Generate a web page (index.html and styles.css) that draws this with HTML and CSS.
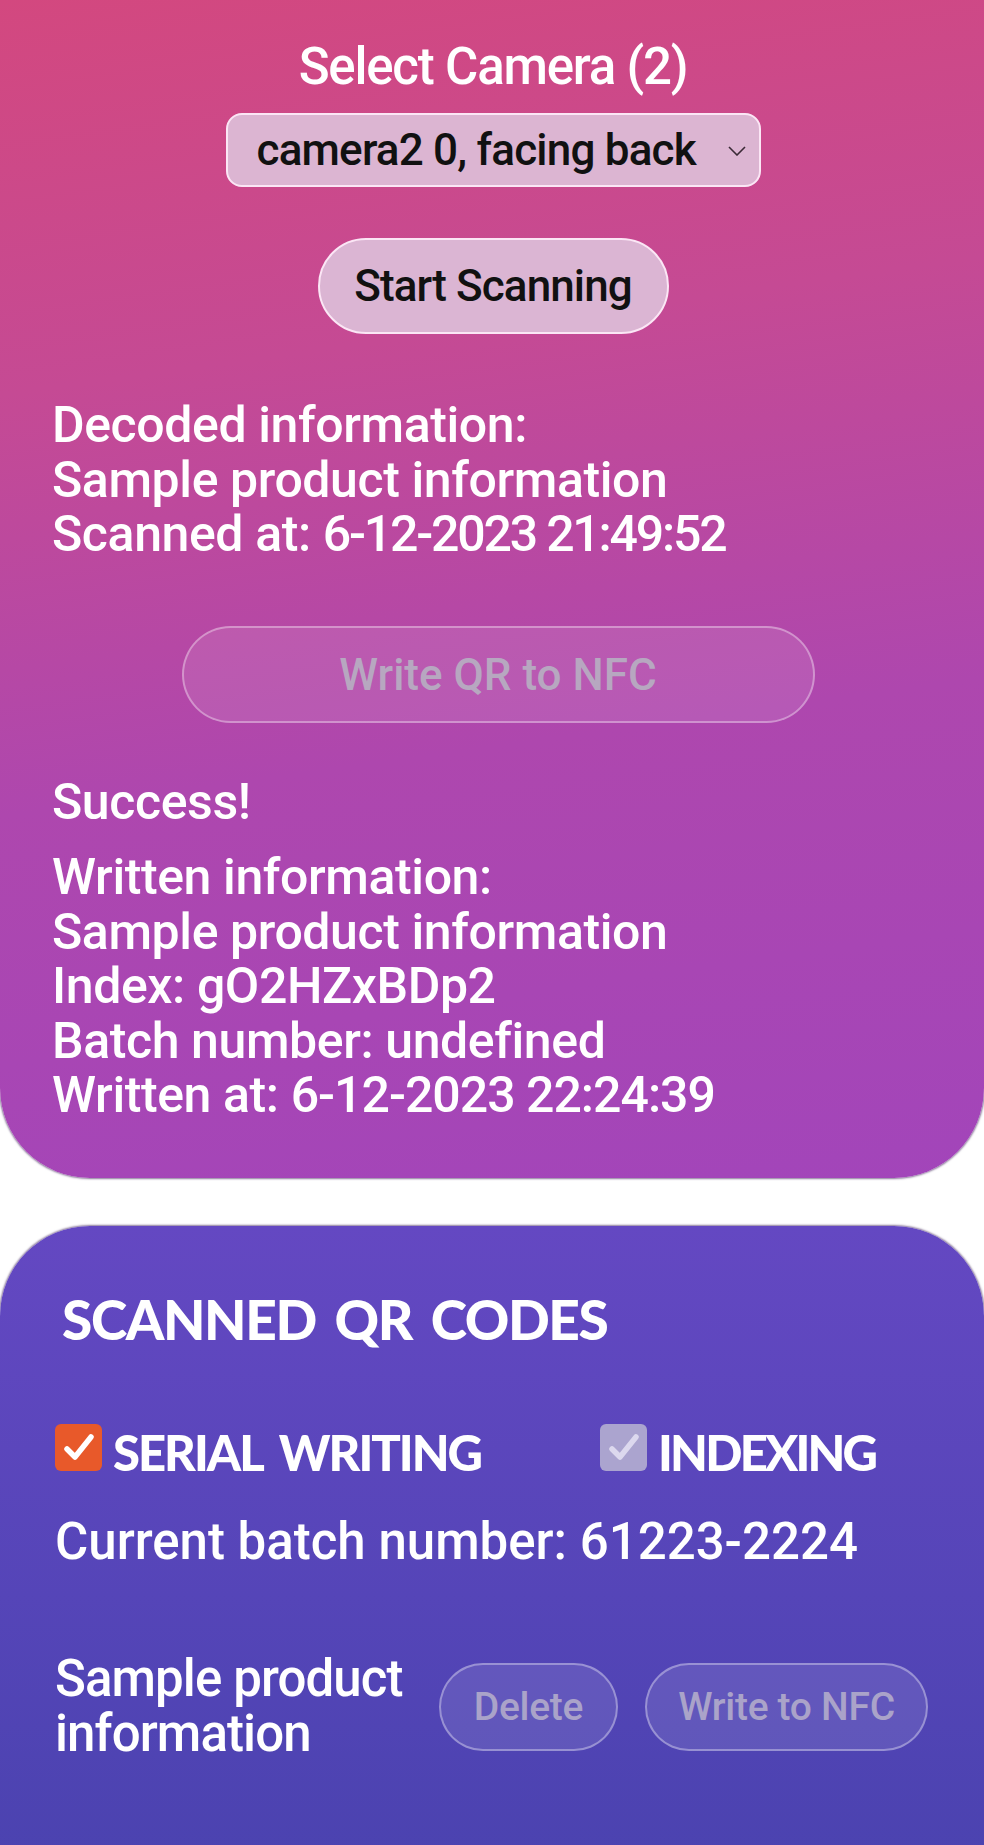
FILE: index.html
```html
<!DOCTYPE html>
<html lang="en">
<head>
<meta charset="utf-8">
<title>QR to NFC</title>
<link rel="stylesheet" href="styles.css">
</head>
<body>
<section class="card card-scan">
  <h2 class="title">Select Camera (2)</h2>
  <div class="select">
    <span class="select-text">camera2 0, facing back</span>
    <svg class="chevron" width="18" height="10" viewBox="0 0 18 10"><polyline points="1,1 9,9 17,1" fill="none" stroke="#3a2a36" stroke-width="1.6"/></svg>
  </div>
  <button class="btn btn-start">Start Scanning</button>
  <div class="info info-decoded">
    <p>Decoded information:</p>
    <p>Sample product information</p>
    <p>Scanned at: <span class="num">6-12-2023 21:49:52</span></p>
  </div>
  <button class="btn btn-ghost btn-write">Write QR to NFC</button>
  <p class="info success">Success!</p>
  <div class="info info-written">
    <p>Written information:</p>
    <p>Sample product information</p>
    <p>Index: gO2HZxBDp2</p>
    <p>Batch number: undefined</p>
    <p>Written at: <span class="num">6-12-2023 22:24:39</span></p>
  </div>
</section>

<section class="card card-list">
  <h2 class="heading">SCANNED QR CODES</h2>
  <div class="checks">
    <label class="check">
      <span class="box box-on"><svg width="34" height="30" viewBox="0 0 34 30"><polyline points="5,16 13,24 29,4" fill="none" stroke="#fff" stroke-width="5.5" stroke-linecap="round" stroke-linejoin="round"/></svg></span>
      <span class="check-label">SERIAL WRITING</span>
    </label>
    <label class="check">
      <span class="box box-dis"><svg width="34" height="30" viewBox="0 0 34 30"><polyline points="5,16 13,24 29,4" fill="none" stroke="#dcd8ee" stroke-width="5.5" stroke-linecap="round" stroke-linejoin="round"/></svg></span>
      <span class="check-label check-label-index">INDEXING</span>
    </label>
  </div>
  <p class="info batch">Current batch number: 61223-2224</p>
  <div class="item">
    <p class="info item-name">Sample product<br>information</p>
    <button class="btn btn-ghost btn-small btn-delete">Delete</button>
    <button class="btn btn-ghost btn-small btn-nfc">Write to NFC</button>
  </div>
</section>
</body>
</html>
```

FILE: styles.css
```css
html, body {
  margin: 0;
  padding: 0;
  background: #ffffff;
}
body {
  font-family: Roboto, "Noto Sans", sans-serif;
  font-weight: 500;
  color: #ffffff;
  overflow: hidden;
}
p, h2 {
  margin: 0;
}
.card {
  box-sizing: border-box;
  width: 984px;
  box-shadow: 0 0 2px 1px rgba(40, 10, 70, 0.55);
}
.card-scan {
  padding: 40px 50px 55.5px 52px;
  border-radius: 0 0 90px 90px;
  background: linear-gradient(172deg, #d3487f 0%, #c54a94 30%, #ae47ae 62%, #a245ba 100%);
  display: flex;
  flex-direction: column;
  align-items: center;
}
.title {
  font-size: 51px;
  line-height: 54px;
  font-weight: 500;
  letter-spacing: -1.2px;
  color: #fff;
}
.select {
  box-sizing: border-box;
  margin-top: 19px;
  height: 74px;
  width: 535px;
  border: 2px solid #fbe6f5;
  border-radius: 16px;
  background: #dcb5d2;
  display: flex;
  align-items: center;
  padding-left: 29px;
  padding-right: 13px;
  color: #111;
}
.select-text {
  font-size: 44px;
  line-height: 50px;
  letter-spacing: -0.8px;
  flex: 1;
}
.chevron {
  margin-top: 2px;
}
.btn {
  font-family: Roboto, "Noto Sans", sans-serif;
  font-weight: 500;
  box-sizing: border-box;
  border-radius: 60px;
  padding: 0;
}
.btn-start {
  margin-top: 51px;
  width: 351px;
  height: 96px;
  border: 2px solid #fbe6f5;
  background: #dbb5d3;
  color: #111;
  font-size: 44px;
  letter-spacing: -0.9px;
}
.btn-ghost {
  border: 2px solid rgba(255, 255, 255, 0.35);
  background: rgba(255, 255, 255, 0.1);
  color: #b7a7c0;
}
.btn-write {
  margin-top: 64.5px;
  width: 633px;
  height: 97px;
  font-size: 44px;
  letter-spacing: 0;
  position: relative;
  left: 5px;
}
.info {
  font-size: 50px;
  line-height: 54.5px;
  letter-spacing: -0.4px;
  align-self: stretch;
}
.num {
  letter-spacing: -2.2px;
}
.info-written .num {
  letter-spacing: -1px;
}
.info-decoded {
  margin-top: 64px;
}
.success {
  margin-top: 52px;
}
.info-written {
  margin-top: 20.5px;
}

.card-list {
  margin-top: 48px;
  padding: 59px 56px 200px 55px;
  border-radius: 90px 90px 0 0;
  background: linear-gradient(180deg, #6448c2 0%, #5545b8 45%, #4441aa 100%);
  min-height: 820px;
}
.card-list .info {
  font-size: 51px;
  letter-spacing: 0;
}
.heading {
  font-family: Lato, "Noto Sans", sans-serif;
  font-weight: 900;
  font-size: 55px;
  line-height: 68px;
  padding-left: 7px;
  letter-spacing: -1.4px;
  word-spacing: 7px;
  color: #fff;
}
.checks {
  margin-top: 71px;
  display: grid;
  grid-template-columns: 545px auto;
  height: 52px;
}
.check {
  display: flex;
  align-items: flex-start;
}
.box {
  box-sizing: border-box;
  width: 47px;
  height: 47px;
  border-radius: 6px;
  display: flex;
  align-items: center;
  justify-content: center;
  flex-shrink: 0;
}
.box-on {
  background: #e8592a;
}
.box-dis {
  background: #aba4cf;
}
.check-label {
  font-family: Lato, "Noto Sans", sans-serif;
  font-weight: 900;
  font-size: 49px;
  line-height: 47px;
  letter-spacing: -2px;
  margin-top: 5px;
  margin-left: 11px;
  word-spacing: 8px;
}
.check-label-index {
  letter-spacing: -2.8px;
}
.batch {
  margin-top: 39px;
}
.item {
  margin-top: 82.5px;
  display: flex;
  align-items: center;
  gap: 27px;
}
.item-name {
  flex: 1;
  white-space: nowrap;
}
.card-list .item-name {
  letter-spacing: -0.9px;
}
.btn-small {
  height: 88px;
  font-size: 39px;
  letter-spacing: -0.3px;
  color: #aaa3c9;
}
.btn-delete {
  width: 179px;
}
.btn-nfc {
  width: 283px;
}
```
